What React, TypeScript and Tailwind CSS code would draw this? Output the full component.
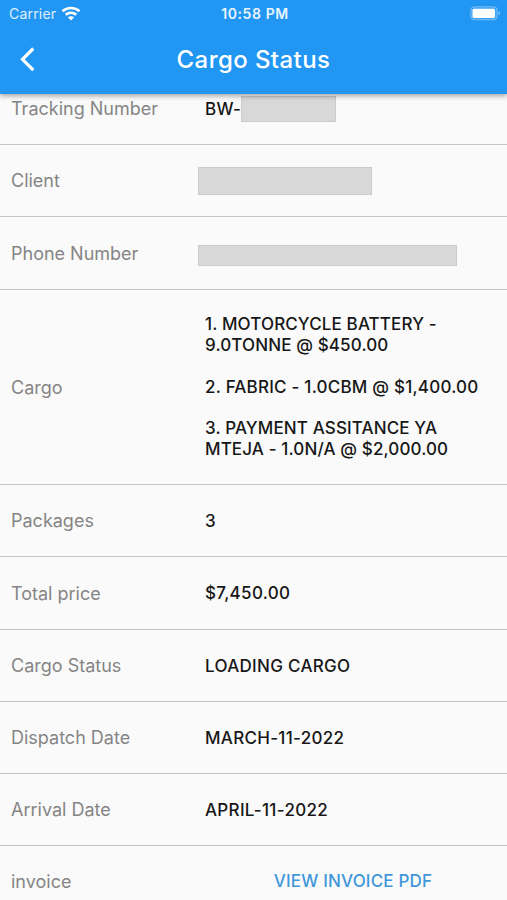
import type { ReactNode } from "react";

const cargo = [
  ["1. MOTORCYCLE BATTERY -", "9.0TONNE @ $450.00"],
  ["2. FABRIC - 1.0CBM @ $1,400.00"],
  ["3. PAYMENT ASSITANCE YA", "MTEJA - 1.0N/A @ $2,000.00"],
];

function StatusBar() {
  return (
    <div className="grid h-[27px] grid-cols-3 items-center pl-[9px] pr-[6px] text-[14px] leading-none">
      <div className="flex items-center gap-[5px]">
        <span className="tracking-[0.2px] text-white/85">Carrier</span>
        <svg className="-mt-px" width="20" height="15" viewBox="0 0 20 15" fill="none" stroke="white" strokeWidth="2.6">
          <path d="M1.500 5.300C6.200.9 13.800.9 18.500 5.300" />
          <path d="M4.700 8.800c3-2.700 7.600-2.700 10.600 0" />
          <path d="M10 14.500 6.900 11.300c1.700-1.500 4.500-1.500 6.200 0Z" fill="white" stroke="none" />
        </svg>
      </div>
      <span className="whitespace-nowrap text-center font-semibold tracking-[0.6px] text-white/90">10:58 PM</span>
      <svg className="-mt-px justify-self-end" width="31" height="15" viewBox="0 0 31 15">
        <rect x="0.8" y="0.8" width="26.400" height="13" rx="3.500" fill="white" fillOpacity="0.12" stroke="white" strokeOpacity="0.35" />
        <rect x="2.500" y="2.700" width="22.500" height="9.200" rx="1.500" fill="white" />
        <path d="M28.700 5.300c1.700.7 1.700 3.300 0 4Z" fill="white" fillOpacity="0.5" />
      </svg>
    </div>
  );
}

function Header() {
  return (
    <header className="relative z-10 h-[94px] shrink-0 bg-[#2196f3] text-white shadow-[0_2px_5px_rgba(0,0,0,0.35)]">
      <StatusBar />
      <div className="grid h-[65px] grid-cols-[56px_1fr_56px] items-center">
        <button aria-label="Back" className="pl-[20px]">
          <svg width="16" height="25" viewBox="0 0 16 25" fill="none" stroke="white" strokeWidth="3.2">
            <path d="M13.300 1.500 2.500 12.300l10.800 10.800" />
          </svg>
        </button>
        <h1 className="text-center text-[24px] font-medium tracking-[0.42px]">Cargo Status</h1>
      </div>
    </header>
  );
}

type RowProps = {
  label: string;
  height?: string;
  children: ReactNode;
};

function Row({ label, height = "h-[72px]", children }: RowProps) {
  return (
    <div className={`flex shrink-0 items-center border-b border-[#c6c6c6] pl-[11px] ${height}`}>
      <span className="w-[187px] shrink-0 text-[18px] text-[#858585]">{label}</span>
      {children}
    </div>
  );
}

function Value({ className = "pt-[2px] tracking-[0.3px]", children }: { className?: string; children: ReactNode }) {
  return <span className={`pl-[7px] text-[17px] font-medium text-[#171717] ${className}`}>{children}</span>;
}

function Redacted({ className }: { className: string }) {
  return <span className={`border border-[#cbcbcb] bg-[#d8d8d8] ${className}`} />;
}

export default function App() {
  return (
    <div className="flex h-[900px] w-[507px] flex-col overflow-hidden bg-[#fafafa] font-['Inter',sans-serif]">
      <Header />
      <main className="-mt-[21px] flex flex-col">
        <Row label="Tracking Number">
          <Value>BW-</Value>
          <Redacted className="h-[26px] w-[95px]" />
        </Row>
        <Row label="Client">
          <Redacted className="h-[28px] w-[174px]" />
        </Row>
        <Row label="Phone Number" height="h-[73px]">
          <Redacted className="mt-[5px] h-[21px] w-[259px]" />
        </Row>
        <Row label="Cargo" height="h-[195px]">
          <Value className="tracking-[0.13px]">
            <span className="flex flex-col gap-[21px] leading-[20.8px]">
              {cargo.map((lines) => (
                <span
                  key={lines[0]}
                  className={`flex flex-col whitespace-nowrap ${lines.length === 1 ? "tracking-[0.22px]" : ""}`}
                >
                  {lines.map((line) => (
                    <span key={line}>{line}</span>
                  ))}
                </span>
              ))}
            </span>
          </Value>
        </Row>
        <Row label="Packages">
          <Value>3</Value>
        </Row>
        <Row label="Total price" height="h-[73px]">
          <Value>$7,450.00</Value>
        </Row>
        <Row label="Cargo Status">
          <Value>LOADING CARGO</Value>
        </Row>
        <Row label="Dispatch Date">
          <Value>MARCH-11-2022</Value>
        </Row>
        <Row label="Arrival Date">
          <Value>APRIL-11-2022</Value>
        </Row>
        <Row label="invoice">
          <a href="#" className="flex-1 pl-px text-center text-[17px] font-medium tracking-[0.17px] text-[#3f97d9]">
            VIEW INVOICE PDF
          </a>
        </Row>
      </main>
    </div>
  );
}
